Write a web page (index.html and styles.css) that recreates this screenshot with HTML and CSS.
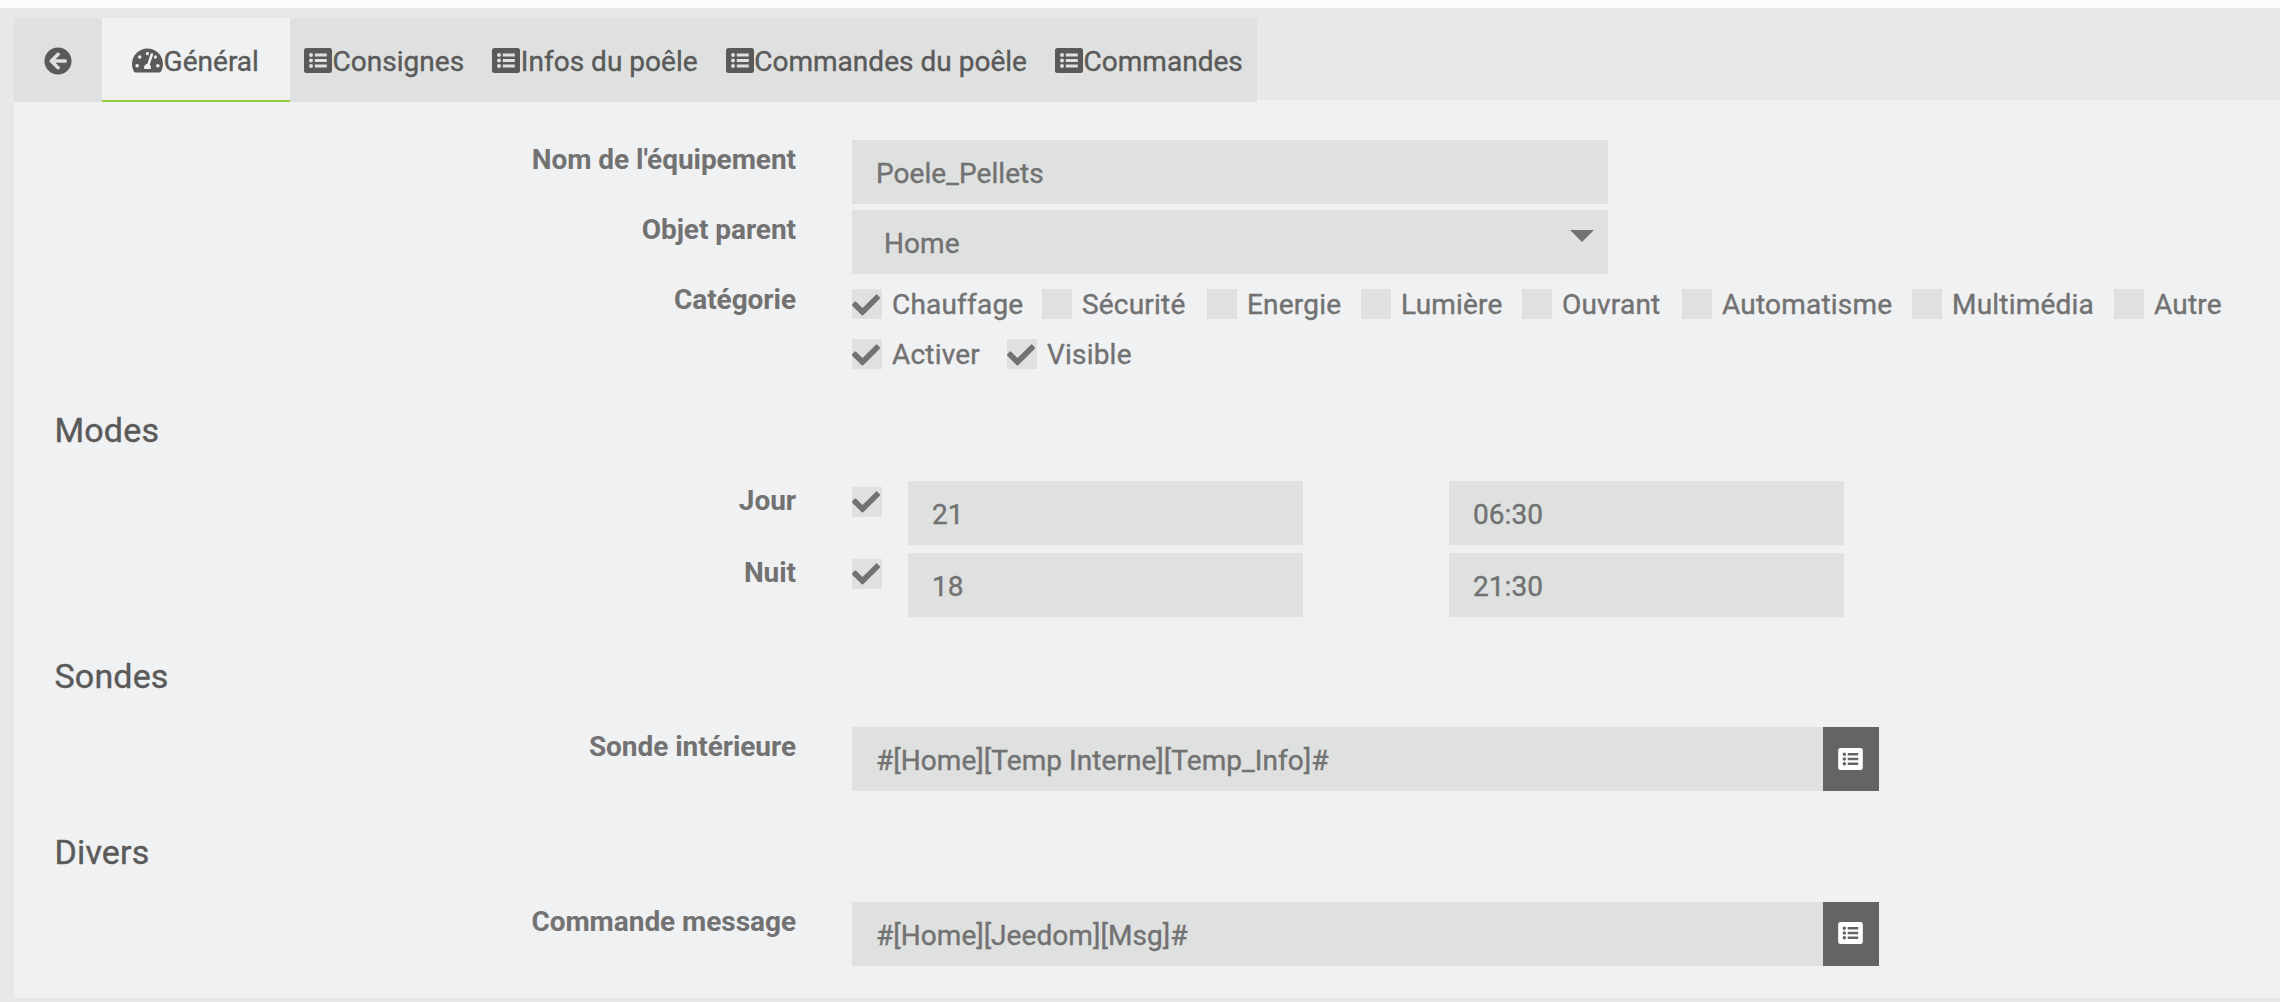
FILE: index.html
```html
<!DOCTYPE html>
<html lang="fr">
<head>
<meta charset="utf-8">
<title>Poele_Pellets</title>
<link rel="stylesheet" href="styles.css">
</head>
<body>
<svg width="0" height="0" class="defs" aria-hidden="true">
  <symbol id="list" viewBox="0 0 28 25"><path fill-rule="evenodd" d="M2.500 0h23A2.500 2.500 0 0 1 28 2.500v20a2.500 2.500 0 0 1-2.500 2.500h-23A2.500 2.500 0 0 1 0 22.500v-20A2.500 2.500 0 0 1 2.500 0zM7 5.100a2 2 0 1 0 0 4 2 2 0 0 0 0-4zM7 10.500a2 2 0 1 0 0 4 2 2 0 0 0 0-4zM7 15.900a2 2 0 1 0 0 4 2 2 0 0 0 0-4zM10.800 5.600v3h12v-3zM10.800 11v3h12v-3zM10.800 16.400v3h12v-3z"/></symbol>
  <symbol id="check" viewBox="0 0 512 512"><path d="M173.898 439.404l-166.400-166.400c-9.997-9.997-9.997-26.206 0-36.204l36.203-36.204c9.997-9.998 26.207-9.998 36.204 0L192 312.690 432.095 72.596c9.997-9.997 26.207-9.997 36.204 0l36.203 36.204c9.997 9.997 9.997 26.206 0 36.204l-294.400 294.401c-9.998 9.997-26.207 9.997-36.204-.001z"/></symbol>
</svg>
<main class="page">
  <nav class="tabs">
    <a class="tab tab-back"><svg class="ico-back" viewBox="0 0 512 512"><path d="M256 504C119 504 8 393 8 256S119 8 256 8s248 111 248 248-111 248-248 248zm28.900-143.600L209.400 288H392c13.300 0 24-10.700 24-24v-16c0-13.300-10.700-24-24-24H209.400l75.500-72.400c9.700-9.300 9.900-24.800.4-34.300l-11-10.900c-9.400-9.400-24.600-9.400-33.900 0L107.700 239c-9.400 9.400-9.400 24.600 0 33.900l132.700 132.700c9.400 9.400 24.600 9.400 33.900 0l11-10.900c9.500-9.500 9.300-25-.4-34.300z"/></svg></a>
    <a class="tab tab-active"><svg class="ico-dash" viewBox="0 32 576 448"><path d="M288 32C128.940 32 0 160.940 0 320c0 52.800 14.250 102.260 39.060 144.800 5.610 9.620 16.300 15.200 27.440 15.200h443c11.140 0 21.830-5.580 27.440-15.200C561.750 422.260 576 372.800 576 320c0-159.060-128.940-288-288-288zm0 64c14.710 0 26.580 10.130 30.320 23.650-1.110 2.260-2.640 4.230-3.450 6.670l-9.220 27.670c-5.130 3.490-10.970 6.010-17.640 6.010-17.670 0-32-14.330-32-32S270.330 96 288 96zM96 384c-17.670 0-32-14.330-32-32s14.330-32 32-32 32 14.330 32 32-14.330 32-32 32zm48-160c-17.670 0-32-14.330-32-32s14.330-32 32-32 32 14.330 32 32-14.330 32-32 32zm246.770-72.410l-61.330 184C343.130 347.330 352 364.540 352 384c0 11.720-3.380 22.550-8.880 32H232.880c-5.500-9.450-8.880-20.280-8.880-32 0-33.940 26.500-61.430 59.900-63.590l61.340-184.010c4.170-12.560 17.730-19.450 30.360-15.170 12.570 4.190 19.350 17.790 15.170 30.360zm14.660 57.200l15.520-46.550c3.470-1.290 7.130-2.230 11.050-2.230 17.670 0 32 14.330 32 32s-14.330 32-32 32c-11.380-.01-20.890-6.280-26.570-15.220zM480 384c-17.670 0-32-14.330-32-32s14.330-32 32-32 32 14.330 32 32-14.330 32-32 32z"/></svg><span>Général</span></a>
    <a class="tab"><svg class="ico-list"><use href="#list"/></svg><span>Consignes</span></a>
    <a class="tab"><svg class="ico-list"><use href="#list"/></svg><span>Infos du poêle</span></a>
    <a class="tab"><svg class="ico-list"><use href="#list"/></svg><span>Commandes du poêle</span></a>
    <a class="tab"><svg class="ico-list"><use href="#list"/></svg><span>Commandes</span></a>
  </nav>
  <form class="panel">
    <div class="row">
      <label class="label">Nom de l'équipement</label>
      <div class="field field-name">Poele_Pellets</div>
    </div>
    <div class="row">
      <label class="label">Objet parent</label>
      <div class="field field-name select"><span>Home</span><svg class="caret" viewBox="0 0 24 12"><path d="M0 0h24L12 12z"/></svg></div>
    </div>
    <div class="row row-checks">
      <label class="label">Catégorie</label>
      <div class="checks">
        <div class="check-line">
          <label class="check"><i class="box"><svg><use href="#check"/></svg></i>Chauffage</label>
          <label class="check"><i class="box"></i>Sécurité</label>
          <label class="check"><i class="box"></i>Energie</label>
          <label class="check"><i class="box"></i>Lumière</label>
          <label class="check"><i class="box"></i>Ouvrant</label>
          <label class="check"><i class="box"></i>Automatisme</label>
          <label class="check"><i class="box"></i>Multimédia</label>
          <label class="check"><i class="box"></i>Autre</label>
        </div>
        <div class="check-line check-line-state">
          <label class="check"><i class="box"><svg><use href="#check"/></svg></i>Activer</label>
          <label class="check"><i class="box"><svg><use href="#check"/></svg></i>Visible</label>
        </div>
      </div>
    </div>
    <h2 class="legend">Modes</h2>
    <div class="row row-mode">
      <label class="label">Jour</label>
      <i class="box"><svg><use href="#check"/></svg></i>
      <div class="field field-temp">21</div>
      <div class="field field-hour">06:30</div>
    </div>
    <div class="row row-mode">
      <label class="label">Nuit</label>
      <i class="box"><svg><use href="#check"/></svg></i>
      <div class="field field-temp">18</div>
      <div class="field field-hour">21:30</div>
    </div>
    <h2 class="legend">Sondes</h2>
    <div class="row">
      <label class="label">Sonde intérieure</label>
      <div class="field field-cmd">#[Home][Temp Interne][Temp_Info]#</div>
      <a class="pick"><svg><use href="#list"/></svg></a>
    </div>
    <h2 class="legend legend-misc">Divers</h2>
    <div class="row">
      <label class="label">Commande message</label>
      <div class="field field-cmd">#[Home][Jeedom][Msg]#</div>
      <a class="pick pick-msg"><svg><use href="#list"/></svg></a>
    </div>
  </form>
</main>
</body>
</html>
```
FILE: styles.css
```css
* { box-sizing: border-box; }
body {
  margin: 0;
  height: 1002px;
  overflow: hidden;
  border-top: 8px solid #fbfbfb;
  background: #e8e8e9;
  font: 400 28px/40px Roboto, "Liberation Sans", sans-serif;
  letter-spacing: 0.06px;
  -webkit-text-stroke: 0.4px currentColor;
  color: #727272;
}
.defs { display: none; }
svg { display: block; fill: currentColor; flex: none; }
.page { padding: 10px 0 0 14px; }

.tabs {
  position: relative;
  display: flex;
  width: 1243px;
  height: 84px;
  background: #dfe1e0;
  color: #5a5a5a;
  letter-spacing: 0.02px;
}
.tab { display: flex; flex: none; align-items: center; padding: 0 14px; white-space: nowrap; }
.tab span { margin-left: 0.600px; padding-top: 3px; }
.tab-back { width: 88px; padding: 1px 0 0 30px; }
.tab-active {
  width: 188px;
  padding: 2px 0 0 30px;
  background: #f0f1f3;
  border-bottom: 2px solid #96c93d;
}
.ico-back { width: 28px; height: 28px; }
.ico-dash { width: 31px; height: 25px; }
.ico-list { width: 28px; height: 25px; }

.panel {
  height: 898px;
  margin-top: -2px;
  padding-top: 40px;
  background: #f0f1f3;
}
.row { display: flex; height: 64px; margin-bottom: 6px; }
.label {
  width: 782px;
  margin-right: 56px;
  flex: none;
  font-weight: 700;
  letter-spacing: -0.05px;
  -webkit-text-stroke: 0;
  text-align: right;
}
.field {
  display: flex;
  align-items: center;
  height: 64px;
  padding: 3px 24px 0;
  background: #dfe1e0;
}
.field-name { width: 756px; }
.select { justify-content: space-between; padding: 3px 14px 0 32px; }
.caret { width: 24px; height: 12px; margin-top: -15px; }

.row-checks { height: 120px; margin-bottom: 0; }
.checks { padding-top: 5px; }
.check-line {
  display: grid;
  grid-template-columns: 190px 165px 154px 161px 160px 230px 202px auto;
  height: 50px;
  letter-spacing: 0.2px;
}
.check-line-state { grid-template-columns: 155px auto; justify-content: start; }
.check { display: flex; gap: 10px; white-space: nowrap; }
.box { display: block; width: 30px; height: 30px; margin-top: 4px; background: #dfe1e0; flex: none; }
.box svg { width: 28px; height: 28px; margin-top: 2px; }

.legend {
  margin: 0;
  padding: 6px 0 0 40.500px;
  height: 81px;
  font-size: 34px;
  line-height: 48px;
  letter-spacing: 0.15px;
  font-weight: 400;
  color: #5a5a5a;
}
.row-mode { margin-bottom: 8px; }
.row-mode .box { margin: 6px 26px 0 0; }
.row-mode .box svg { margin-top: 1px; }
.row-mode + .legend { height: 102px; padding-top: 27px; }
.field-temp { width: 395px; }
.field-hour { width: 395px; margin-left: 146px; }
.field-cmd { width: 971px; }
.pick { width: 56px; height: 64px; padding: 21px 0 0 15px; background: #646464; color: #fff; }
.pick-msg { padding-top: 20px; }
.pick svg { width: 25px; height: 22px; }
.row + .legend-misc { height: 105px; padding-top: 31px; }
```
